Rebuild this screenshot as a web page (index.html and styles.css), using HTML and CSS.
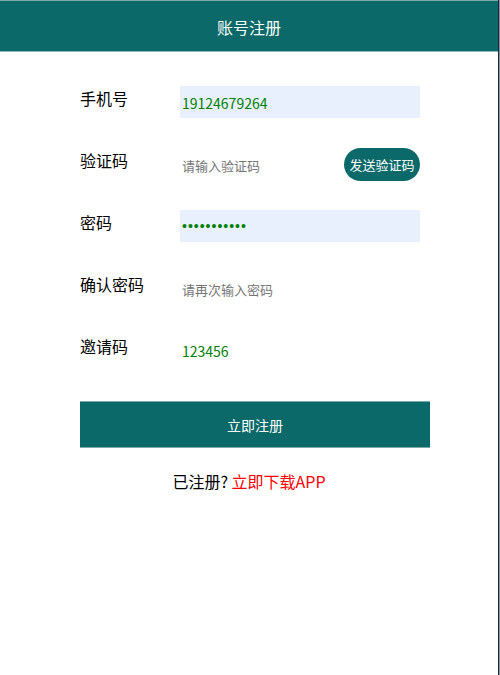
FILE: index.html
```html
<!DOCTYPE html>
<html lang="zh">
<head>
<meta charset="utf-8">
<title>账号注册</title>
<link rel="stylesheet" href="styles.css">
</head>
<body>
<div class="page">
  <header class="topbar">账号注册</header>
  <form class="form">
    <div class="row">
      <label class="label">手机号</label>
      <input class="field filled" type="text" value="19124679264">
    </div>
    <div class="row">
      <label class="label">验证码</label>
      <input class="field" type="text" placeholder="请输入验证码">
      <button type="button" class="send">发送验证码</button>
    </div>
    <div class="row">
      <label class="label">密码</label>
      <input class="field filled pwd" type="password" value="12345678901">
    </div>
    <div class="row">
      <label class="label">确认密码</label>
      <input class="field" type="password" placeholder="请再次输入密码">
    </div>
    <div class="row">
      <label class="label">邀请码</label>
      <input class="field" type="text" value="123456">
    </div>
    <button type="button" class="submit">立即注册</button>
    <p class="footer">已注册? <a class="link" href="#">立即下载APP</a></p>
  </form>
</div>
</body>
</html>
```
FILE: styles.css
```css
html, body {
  margin: 0;
  padding: 0;
  background: #8096b0;
}
.page {
  width: 498px;
  height: 675px;
  background: #fff;
  border-right: 1px solid #1e2732;
  font-family: "Noto Sans CJK SC", "Liberation Sans", sans-serif;
  overflow: hidden;
}
.topbar {
  background: #0b6a69;
  border-top: 1px solid #7fa9a9;
  border-bottom: 1px solid #8fb8b8;
  box-sizing: border-box;
  height: 52px;
  color: #fff;
  font-size: 16px;
  display: flex;
  align-items: center;
  justify-content: center;
  padding-top: 2px;
}
.form {
  display: flex;
  flex-direction: column;
  padding: 34px 0 0 0;
  margin: 0;
}
.row {
  display: flex;
  align-items: flex-start;
  width: 340px;
  height: 32px;
  margin: 0 0 30px 80px;
  position: relative;
}
.label {
  width: 100px;
  flex: none;
  font-size: 16px;
  line-height: 24px;
  color: #000;
}
.field {
  width: 240px;
  height: 32px;
  box-sizing: border-box;
  border: none;
  outline: none;
  background: transparent;
  padding: 2px 2px 0;
  font-family: inherit;
  font-size: 14px;
  color: #008000;
}
.field.pwd {
  font-family: "Liberation Sans", sans-serif;
  letter-spacing: 1px;
  padding-top: 0;
}
.field::placeholder {
  color: #757575;
  font-family: "Noto Sans CJK SC", sans-serif;
  letter-spacing: 0;
  font-size: 13px;
}
.field.filled {
  background: #e8f0fe;
}
.send {
  position: absolute;
  left: 264px;
  top: 0;
  width: 76px;
  height: 33px;
  border: none;
  border-radius: 17px;
  background: #0b6a69;
  color: #fff;
  font-family: inherit;
  font-size: 13px;
  padding: 0;
}
.submit {
  width: 350px;
  height: 47px;
  margin: 5px 0 0 80px;
  border: none;
  border-top: 1px solid #7fa9a9;
  border-bottom: 1px solid #7fa9a9;
  background: #0b6a69;
  color: #fff;
  font-family: inherit;
  font-size: 14px;
}
.footer {
  margin: 21px 0 0;
  text-align: center;
  font-size: 16px;
  color: #000;
}
.link {
  color: #ff0000;
  text-decoration: none;
}
```
